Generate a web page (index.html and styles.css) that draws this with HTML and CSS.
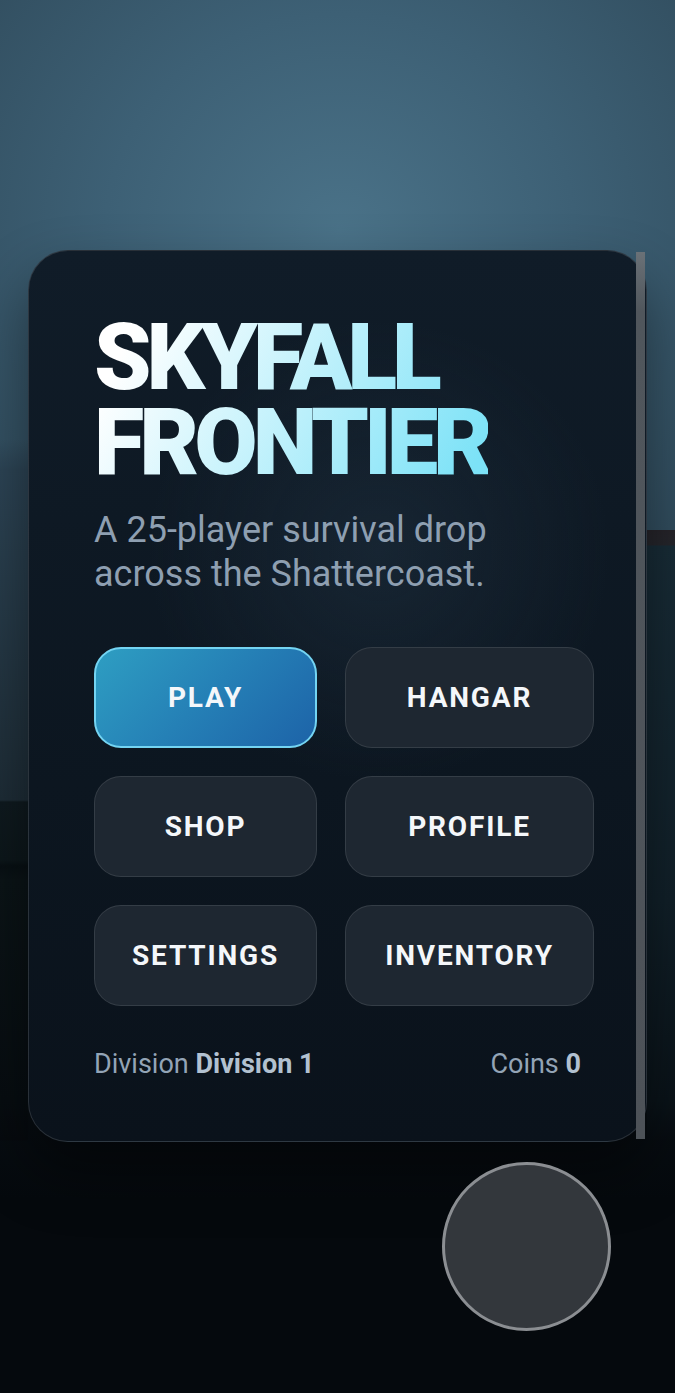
FILE: index.html
```html
<!DOCTYPE html>
<html lang="en">
<head>
<meta charset="UTF-8" />
<meta name="viewport" content="width=device-width, initial-scale=1" />
<title>Skyfall Frontier</title>
<link rel="stylesheet" href="styles.css">
</head>
<body>
  <main class="scene" aria-label="Main menu">
    <section class="menu-card">
      <h1 class="game-title">SKYFALL<br>FRONTIER</h1>
      <p class="tagline">A 25-player survival drop across the Shattercoast.</p>

      <nav class="menu-grid" aria-label="Menu">
        <button class="menu-btn primary" type="button">PLAY</button>
        <button class="menu-btn" type="button">HANGAR</button>
        <button class="menu-btn" type="button">SHOP</button>
        <button class="menu-btn" type="button">PROFILE</button>
        <button class="menu-btn" type="button">SETTINGS</button>
        <button class="menu-btn" type="button">INVENTORY</button>
      </nav>

      <div class="stats">
        <span>Division <b>Division 1</b></span>
        <span>Coins <b>0</b></span>
      </div>

      <div class="scroll-thumb" aria-hidden="true"></div>
    </section>

    <button class="jump-btn" type="button" aria-label="Jump"></button>
  </main>
</body>
</html>
```

FILE: styles.css
```css
/* Reset and base */
* {
  box-sizing: border-box;
}
html, body {
  margin: 0;
}
body {
  font-family: Roboto, 'Noto Sans', sans-serif;
  min-height: 1393px;
  background-color: #05090d;
  background:
    /* right strip of the world behind the card */
    linear-gradient(180deg, rgba(0,0,0,0) 0, rgba(0,0,0,0) 530px, #26242a 530px, #25262c 545px, #182c37 546px, #112029 900px, #0a1319 1100px, #070c11 1140px, rgba(5,9,13,0) 1141px) right top / 28px 100% no-repeat,
    /* left strip */
    linear-gradient(180deg, rgba(0,0,0,0) 0, rgba(0,0,0,0) 440px, #2d4556 470px, #1e2d37 800px, #0f1a1f 802px, #0d171b 860px, #081014 866px, #0b1417 880px, #070d11 1100px, #060a0e 1140px, rgba(5,9,13,0) 1141px) left top / 28px 100% no-repeat,
    radial-gradient(ellipse 520px 480px at 340px 230px, #4a7288 0%, #3d6075 45%, #2e4858 100%) left top / 100% 560px no-repeat,
    linear-gradient(180deg, #2e4858 0, #1b2a34 700px, #0a1218 1000px, #05090d 1200px, #05090d 100%);
}
/* Scene */
.scene {
  position: relative;
  min-height: 1393px;
  padding: 250px 28px 0;
}
/* Card */
.menu-card {
  position: relative;
  padding: 64px 65px 61px;
  border-radius: 40px;
  border: 1px solid rgba(255, 255, 255, 0.13);
  background:
    radial-gradient(circle 230px at 350px 300px, rgba(40, 60, 78, 0.35), rgba(40, 60, 78, 0) 100%),
    linear-gradient(180deg, #101c28 0%, #0c1620 60%, #0a121b 100%);
  box-shadow: 0 30px 60px rgba(0, 0, 0, 0.45);
}
.game-title {
  margin: 0;
  font-size: 92px;
  font-weight: 900;
  line-height: 85px;
  letter-spacing: -0.055em;
  background: linear-gradient(120deg, #ffffff 10%, #c9f3fc 45%, #7ce2f7 95%);
  -webkit-background-clip: text;
  background-clip: text;
  color: transparent;
  width: max-content;
}
.tagline {
  margin: 23px 0 0;
  font-size: 36px;
  line-height: 44px;
  color: #8e9fb1;
  max-width: 430px;
}
/* Buttons */
.menu-grid {
  display: grid;
  grid-template-columns: 223px 249px;
  grid-auto-rows: 101px;
  gap: 28px;
  margin-top: 51px;
  width: 500px;
}
.menu-btn {
  font-family: Roboto, 'Noto Sans', sans-serif;
  font-size: 28px;
  font-weight: 700;
  letter-spacing: 0.065em;
  color: #f4f7fa;
  background-color: #1e2731;
  border: 1.5px solid rgba(255, 255, 255, 0.1);
  border-radius: 27px;
  cursor: pointer;
  padding: 0;
}
.menu-btn.primary {
  background: linear-gradient(135deg, #2e9ec2 0%, #2580b6 50%, #1d63a8 100%);
  border: 2px solid #74d4f2;
}
/* Footer stats */
.stats {
  display: flex;
  justify-content: space-between;
  margin-top: 42px;
  font-size: 27px;
  line-height: 32px;
  color: #93a4b6;
}
.stats b {
  font-weight: 700;
  color: #b2c1d0;
}
.scroll-thumb {
  position: absolute;
  top: 1px;
  right: 1px;
  bottom: 2px;
  width: 9px;
  background: linear-gradient(180deg, #6a7177 0, #50565c 60px, #4d5258 100%);
}
/* Floating round button */
.jump-btn {
  position: absolute;
  top: 1162px;
  left: 442px;
  width: 169px;
  height: 169px;
  border-radius: 50%;
  border: 3px solid #8b8e92;
  background: #33373c;
  padding: 0;
  cursor: pointer;
}
```
